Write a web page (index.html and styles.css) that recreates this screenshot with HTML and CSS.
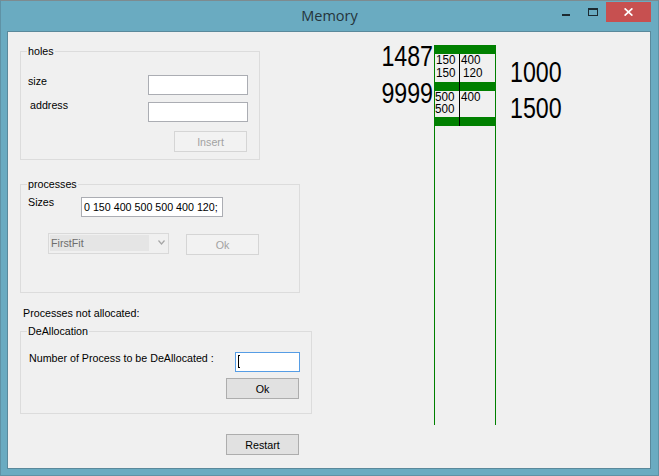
FILE: index.html
```html
<!DOCTYPE html>
<html lang="en">
<head>
<meta charset="utf-8">
<title>Memory</title>
<link rel="stylesheet" href="styles.css">
</head>
<body>
<div class="window">
  <div class="titlebar">
    <span class="title">Memory</span>
    <div class="controls">
      <span class="ico-min"></span>
      <span class="ico-max"></span>
      <span class="btn-close">
        <svg class="ico-x" width="9" height="8" viewBox="0 0 9 8"><path d="M0.6 0.4 L8.4 7.6 M8.4 0.4 L0.6 7.6" stroke="#fff" stroke-width="1.7" fill="none"/></svg>
      </span>
    </div>
  </div>
  <div class="client">
    <div class="form-col">
      <div class="group holes">
        <span class="group-title">holes</span>
        <div class="row row-size">
          <span class="lbl lbl-size">size</span>
          <input class="tb" type="text" value="">
        </div>
        <div class="row row-addr">
          <span class="lbl lbl-addr">address</span>
          <input class="tb" type="text" value="">
        </div>
        <button class="btn btn-insert" disabled>Insert</button>
      </div>

      <div class="group processes">
        <span class="group-title">processes</span>
        <div class="row row-sizes">
          <span class="lbl lbl-sizes">Sizes</span>
          <input class="tb tb-sizes" type="text" value="0 150 400 500 500 400 120;">
        </div>
        <div class="row row-algo">
          <div class="combo">
            <span class="combo-sel">FirstFit</span>
            <svg class="combo-arrow" width="7" height="5" viewBox="0 0 7 5"><path d="M0.5 0.5 L3.5 4 L6.5 0.5" stroke="#a6a6a6" stroke-width="1.2" fill="none"/></svg>
          </div>
          <button class="btn btn-ok1" disabled>Ok</button>
        </div>
      </div>

      <span class="lbl notalloc">Processes not allocated:</span>

      <div class="group dealloc">
        <span class="group-title">DeAllocation</span>
        <div class="row row-num">
          <span class="lbl lbl-num">Number of Process to be DeAllocated :</span>
          <div class="tb tb-focus"><span class="caret"></span></div>
        </div>
        <button class="btn btn-ok2">Ok</button>
      </div>

      <button class="btn btn-restart">Restart</button>
    </div>

    <svg class="canvas" width="310" height="436" viewBox="340 32 310 436">
      <rect class="green" x="434" y="45" width="1" height="380"/>
      <rect class="green" x="495" y="45" width="1" height="380"/>
      <rect class="green" x="434" y="45" width="62" height="9"/>
      <rect class="green" x="434" y="82" width="62" height="9"/>
      <rect class="green" x="434" y="117" width="62" height="9"/>
      <rect class="divider" x="459" y="54" width="1" height="72"/>

      <g transform="translate(433 65.5) scale(1.45 1.9)"><text class="seg-lg" text-anchor="end">1487</text></g>
      <g transform="translate(433 103) scale(1.45 1.9)"><text class="seg-lg" text-anchor="end">9999</text></g>
      <g transform="translate(510 81.5) scale(1.45 1.9)"><text class="seg-lg">1000</text></g>
      <g transform="translate(510 117.5) scale(1.45 1.9)"><text class="seg-lg">1500</text></g>

      <g transform="translate(436 64) scale(1.3 1.4)"><text class="seg-sm">150</text></g>
      <g transform="translate(461 64) scale(1.3 1.4)"><text class="seg-sm">400</text></g>
      <g transform="translate(436 76.5) scale(1.3 1.4)"><text class="seg-sm">150</text></g>
      <g transform="translate(463 76.5) scale(1.3 1.4)"><text class="seg-sm">120</text></g>
      <g transform="translate(435 100.5) scale(1.3 1.4)"><text class="seg-sm">500</text></g>
      <g transform="translate(461 100.5) scale(1.3 1.4)"><text class="seg-sm">400</text></g>
      <g transform="translate(435 112.5) scale(1.3 1.4)"><text class="seg-sm">500</text></g>
    </svg>
  </div>
</div>
</body>
</html>
```

FILE: styles.css
```css
* { box-sizing: border-box; }

html, body {
  margin: 0;
  padding: 0;
}

body {
  width: 659px;
  height: 476px;
  overflow: hidden;
  font-family: "Liberation Sans", Arial, sans-serif;
  font-size: 10.7px;
  color: #000;
  background: #6aabc1;
}

.window {
  width: 659px;
  height: 476px;
  background: #6aabc1;
  border: 1px solid #5f92a5;
  border-top-color: #7d8b90;
  display: flex;
  flex-direction: column;
}

/* ---------- title bar ---------- */
.titlebar {
  height: 30px;
  display: grid;
  grid-template-columns: 1fr auto 1fr;
  align-items: start;
}

.title {
  grid-column: 2;
  font-family: "Open Sans", "Noto Sans", sans-serif;
  font-size: 14.5px;
  line-height: 20px;
  margin-top: 5px;
  color: #25343b;
}

.controls {
  grid-column: 3;
  justify-self: end;
  display: flex;
  align-items: flex-start;
  margin-right: 7px;
}

.ico-min {
  display: block;
  width: 8px;
  height: 2px;
  margin-top: 13px;
  background: #1c2a31;
}

.ico-max {
  display: block;
  width: 10px;
  height: 8px;
  margin-top: 7px;
  margin-left: 18px;
  border: 1px solid #1c2a31;
  border-top-width: 2px;
}

.btn-close {
  display: flex;
  align-items: center;
  justify-content: center;
  width: 45px;
  height: 20px;
  margin-top: 1px;
  margin-left: 8px;
  background: #c75050;
}

.ico-x { display: block; }

/* ---------- client area ---------- */
.client {
  margin-left: 6px;
  width: 644px;
  height: 438px;
  border: 1px solid #5a899b;
  background: #f0f0f0;
  display: flex;
}

.form-col {
  width: 332px;
  padding-left: 12px;
  display: flex;
  flex-direction: column;
  align-items: flex-start;
}

.canvas {
  display: block;
  width: 310px;
  height: 436px;
}

/* ---------- group boxes ---------- */
.group {
  position: relative;
  border: 1px solid #dcdcdc;
  display: flex;
  flex-direction: column;
  align-items: flex-start;
}

.group-title {
  position: absolute;
  top: -7px;
  left: 6px;
  padding: 0 1px;
  line-height: 13px;
  background: #f0f0f0;
}

.row {
  display: flex;
  align-items: flex-start;
}

.lbl {
  display: block;
  line-height: 13px;
  white-space: nowrap;
}

.tb {
  display: block;
  width: 100px;
  height: 20px;
  margin: 0;
  border: 1px solid #abadb3;
  background: #fff;
  padding: 0 2px;
  font: inherit;
  color: #000;
  outline: none;
}

.btn {
  display: block;
  width: 73px;
  height: 21px;
  margin: 0;
  padding: 0;
  font: inherit;
  color: #000;
  border: 1px solid #adadad;
  background: #e1e1e1;
  border-radius: 0;
}

.btn:disabled {
  border-color: #d5d5d5;
  background: #f2f2f2;
  color: #a2a2a2;
}

/* holes */
.holes {
  margin-top: 19px;
  width: 240px;
  height: 109px;
}

.row-size { margin-top: 23px; }

.lbl-size {
  margin-left: 7px;
  width: 120px;
}

.row-addr { margin-top: 7px; }

.lbl-addr {
  margin-left: 9px;
  width: 118px;
  margin-top: -3px;
}

.btn-insert {
  margin-top: 9px;
  margin-left: 153px;
}

/* processes */
.processes {
  margin-top: 24px;
  width: 280px;
  height: 109px;
}

.row-sizes { margin-top: 12px; }

.lbl-sizes {
  margin-left: 7px;
  width: 53px;
  margin-top: -1px;
}

.tb-sizes { width: 142px; }

.row-algo { margin-top: 16px; }

.combo {
  display: flex;
  align-items: flex-start;
  margin-left: 27px;
  width: 121px;
  height: 21px;
  border: 1px solid #d9d9d9;
  background: #f0f0f0;
}

.combo-sel {
  display: block;
  margin: 1px 0 0 1px;
  width: 99px;
  height: 16px;
  line-height: 16px;
  padding-left: 1px;
  background: #e5e5e5;
  color: #6d6d6d;
}

.combo-arrow {
  display: block;
  margin-left: 9px;
  margin-top: 6px;
}

.btn-ok1 {
  margin-left: 17px;
  margin-top: 1px;
}

/* not allocated */
.notalloc {
  margin-top: 14px;
  margin-left: 3px;
}

/* deallocation */
.dealloc {
  margin-top: 11px;
  width: 292px;
  height: 83px;
}

.row-num { margin-top: 20px; }

.lbl-num {
  margin-left: 8px;
  width: 206px;
}

.tb-focus {
  width: 65px;
  border-color: #569de5;
  padding: 0;
}

.caret {
  display: block;
  width: 2px;
  height: 13px;
  margin-left: 2px;
  margin-top: 2px;
  border-left: 1px solid #000;
  border-top: 1px solid #000;
  border-bottom: 1px solid #000;
}

.btn-ok2 {
  margin-top: 6px;
  margin-left: 205px;
}

.btn-restart {
  margin-top: 20px;
  margin-left: 206px;
}

/* ---------- memory drawing ---------- */
.green { fill: #008000; }
.divider { fill: #000; }

.seg-lg {
  font-family: "Liberation Sans", Arial, sans-serif;
  font-size: 16px;
  fill: #000;
}

.seg-sm {
  font-family: "Liberation Sans", Arial, sans-serif;
  font-size: 9px;
  fill: #000;
}
```
